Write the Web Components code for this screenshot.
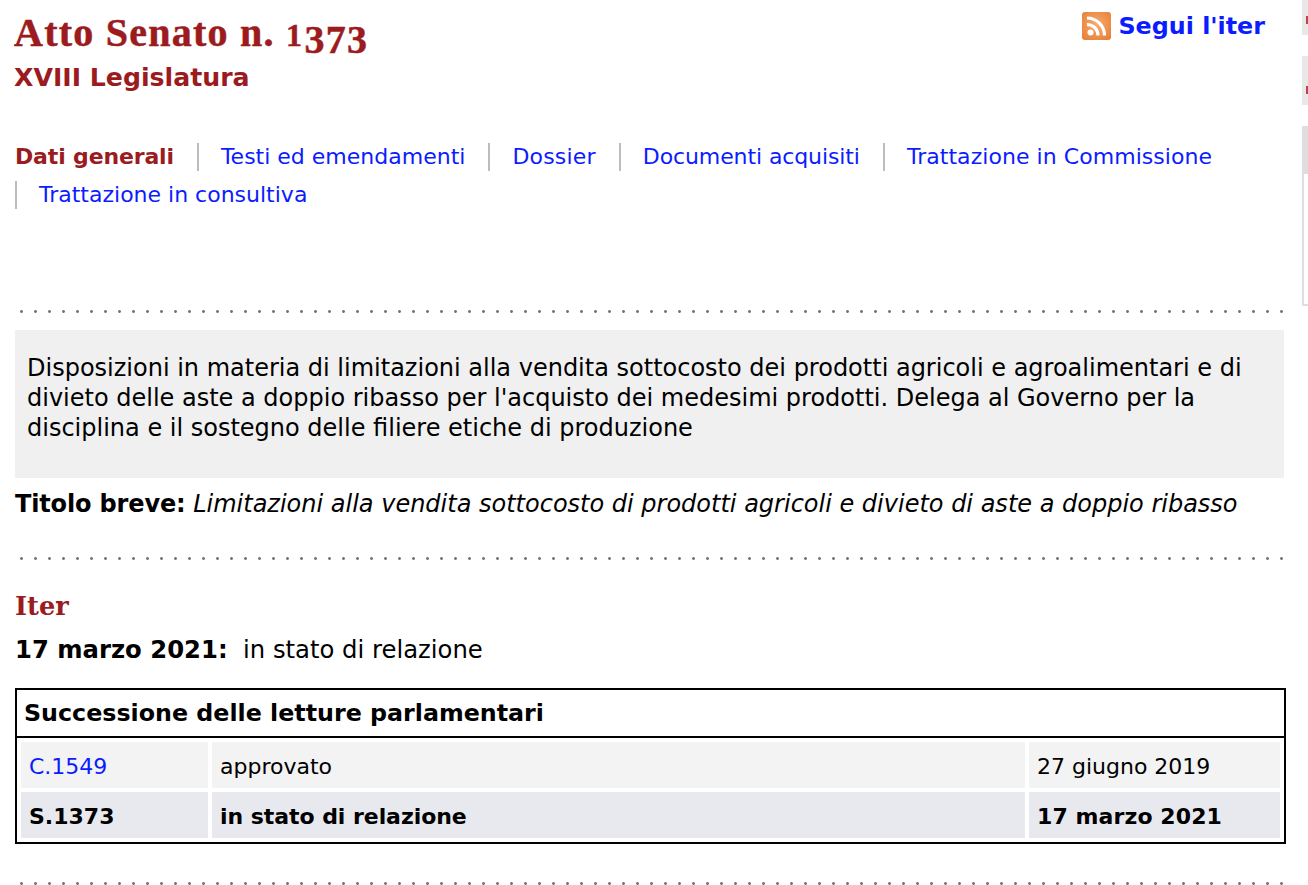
<!DOCTYPE html>
<html lang="it">
<head>
<meta charset="utf-8">
<title>Atto Senato n. 1373</title>
<style>
  html, body { margin: 0; padding: 0; background: #fff; overflow: hidden; }
  body { font-family: "DejaVu Sans", Verdana, sans-serif; font-size: 24px; color: #000; }
  #page { display: grid; grid-template-columns: 1302px 6px; height: 885px; overflow: hidden; }
  #main { padding: 0 18px 0 15px; }
  .breve { line-height: 30px; margin-top: 11px; white-space: nowrap; }
  .breve b { letter-spacing: -.15px; }
  .stato { line-height: 30px; margin-top: 14px; font-size: 24.3px; }
  .uno { font-size: 32px; letter-spacing: 2.5px; }
  .old { font-size: 40px; vertical-align: -7px; }
</style>
</head>
<body>

<template id="title-tpl">
  <style>
    :host { display: flex; justify-content: space-between; align-items: flex-start; height: 104px; margin-left: -1px; box-sizing: border-box; padding: 12px 19px 0 0; }
    h1 { margin: 0; height: 42px; font: bold 40px/42px "Liberation Serif", Georgia, serif; color: #9b1b1e; white-space: nowrap; letter-spacing: 1.25px; -webkit-text-stroke: .5px #9b1b1e; }
    h2 { margin: 9px 0 0; font: bold 25.2px/30px "DejaVu Sans", sans-serif; color: #9b1b1e; }
    a { display: flex; align-items: center; gap: 7px; color: #0b1cff; font-weight: bold; font-size: 23.8px; text-decoration: none; line-height: 28px; }
    svg { display: block; }
  </style>
  <div><h1><slot name="title"></slot></h1><h2><slot name="sub"></slot></h2></div>
  <a href="#"><svg width="29" height="28" viewBox="0 0 29 28">
    <defs><radialGradient id="rss" cx=".5" cy=".45" r=".75"><stop offset="0" stop-color="#f6ad72"/><stop offset="1" stop-color="#e67a30"/></radialGradient></defs>
    <rect width="29" height="28" rx="3" fill="url(#rss)"/>
    <circle cx="8.5" cy="20.5" r="3" fill="#fff"/>
    <path d="M5 12.5a11 11 0 0 1 11 11M5 6a17.5 17.5 0 0 1 17.5 17.5" fill="none" stroke="#fff" stroke-width="3.2"/>
  </svg><slot name="link"></slot></a>
</template>

<template id="tabs-tpl">
  <style>
    :host { display: flex; flex-wrap: wrap; row-gap: 10px; height: 167px; margin-top: 39px; box-sizing: border-box; align-content: flex-start; font-size: 22px; }
  </style>
  <slot></slot>
</template>

<template id="tab-tpl">
  <style>
    :host { display: block; line-height: 28px; padding: 0 23px 0 22px; border-left: 2px solid #bdbdbd; }
    :host([first]) { border-left: 0; padding-left: 0; padding-right: 23px; }
    :host([current]) { color: #9b1b1e; font-weight: bold; letter-spacing: -.15px; }
    :host([current]) a { color: inherit; }
    a { color: #0b1cff; text-decoration: none; }
  </style>
  <a href="#"><slot></slot></a>
</template>

<template id="dots-tpl">
  <style>
    :host { display: block; height: 3px; background: radial-gradient(circle at 1.5px 1.5px, #777 1.1px, transparent 1.7px) 5px 0 / 14px 3px repeat-x; }
  </style>
</template>

<template id="block-tpl">
  <style>
    :host { display: block; background: #f0f0f0; padding: 23px 12px 0; height: 148px; box-sizing: border-box; line-height: 30px; margin-top: 17px; font-size: 24px; }
  </style>
  <slot></slot>
</template>

<template id="table-tpl">
  <style>
    :host { display: block; border: 2px solid #000; margin: 23px -2px 0 0; }
    .head { font-weight: bold; font-size: 23.75px; line-height: 45px; padding: 1px 0 0 7px; border-bottom: 2px solid #000; }
    .rows { display: grid; grid-template-columns: 187px 813px 251px; gap: 4px; padding: 4px; font-size: 22px; }
  </style>
  <div class="head"><slot name="head"></slot></div>
  <div class="rows"><slot></slot></div>
</template>

<template id="cell-tpl">
  <style>
    :host { display: block; line-height: 43px; padding: 3px 0 0 8px; background: #f3f3f3; }
    :host([strong]) { background: #e8e9ee; font-weight: bold; }
    ::slotted(a) { color: #0b1cff; text-decoration: none; }
  </style>
  <slot></slot>
</template>

<template id="head-tpl">
  <style>
    :host { display: block; font: bold 25.7px/30px "DejaVu Serif", Georgia, serif; color: #9b1b1e; margin-top: 31px; }
  </style>
  <slot></slot>
</template>

<template id="side-tpl">
  <style>
    :host { display: flex; flex-direction: column; gap: 21px; }
    div { background: #e8e8e8; position: relative; }
    .a { height: 35px; }
    .b { height: 49px; }
    .c { height: 180px; background: #fff; border: 2px solid #dedede; border-right: 0; border-top: 48px solid #dedede; box-sizing: border-box; }
    i { position: absolute; left: 4px; width: 2px; height: 8px; background: #c0404e; }
  </style>
  <div class="a"><i style="top:16px"></i></div>
  <div class="b"><i style="top:30px"></i></div>
  <div class="c"></div>
</template>

<main id="page">
  <div id="main">
    <atto-title>
      <span slot="title">Atto Senato n. <span class="uno">1</span><span class="old">373</span></span>
      <span slot="sub">XVIII Legislatura</span>
      <span slot="link">Segui l'iter</span>
    </atto-title>
    <atto-tabs>
      <atto-tab first current>Dati generali</atto-tab>
      <atto-tab>Testi ed emendamenti</atto-tab>
      <atto-tab style="letter-spacing:.2px">Dossier</atto-tab>
      <atto-tab style="letter-spacing:-.1px">Documenti acquisiti</atto-tab>
      <atto-tab style="letter-spacing:.05px">Trattazione in Commissione</atto-tab>
      <atto-tab>Trattazione in consultiva</atto-tab>
    </atto-tabs>
    <dot-line></dot-line>
    <grey-block>Disposizioni in materia di limitazioni alla vendita sottocosto dei prodotti agricoli e agroalimentari e di divieto delle aste a doppio ribasso per l'acquisto dei medesimi prodotti. Delega al Governo per la disciplina e il sostegno delle filiere etiche di produzione</grey-block>
    <div class="breve"><b>Titolo breve:</b> <i>Limitazioni alla vendita sottocosto di prodotti agricoli e divieto di aste a doppio ribasso</i></div>
    <dot-line style="margin-top:38px"></dot-line>
    <section-head>Iter</section-head>
    <div class="stato"><b>17 marzo 2021:</b>&nbsp; in stato di relazione</div>
    <letture-table>
      <span slot="head">Successione delle letture parlamentari</span>
      <lettura-cell><a href="#">C.1549</a></lettura-cell>
      <lettura-cell>approvato</lettura-cell>
      <lettura-cell>27 giugno 2019</lettura-cell>
      <lettura-cell strong>S.1373</lettura-cell>
      <lettura-cell strong style="letter-spacing:-.05px">in stato di relazione</lettura-cell>
      <lettura-cell strong style="letter-spacing:.1px">17 marzo 2021</lettura-cell>
    </letture-table>
    <dot-line style="margin-top:38px"></dot-line>
  </div>
  <side-strip></side-strip>
</main>

<script>
  function define(name, tpl) {
    customElements.define(name, class extends HTMLElement {
      constructor() {
        super();
        this.attachShadow({ mode: 'open' });
        this.shadowRoot.appendChild(document.getElementById(tpl).content.cloneNode(true));
      }
    });
  }
  define('atto-title', 'title-tpl');
  define('atto-tabs', 'tabs-tpl');
  define('atto-tab', 'tab-tpl');
  define('dot-line', 'dots-tpl');
  define('grey-block', 'block-tpl');
  define('section-head', 'head-tpl');
  define('letture-table', 'table-tpl');
  define('lettura-cell', 'cell-tpl');
  define('side-strip', 'side-tpl');
</script>
</body>
</html>
